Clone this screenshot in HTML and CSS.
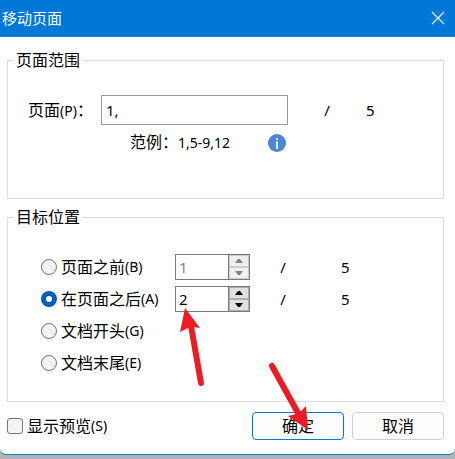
FILE: index.html
```html
<!DOCTYPE html>
<html lang="zh-CN">
<head>
    <meta charset="UTF-8">
    <meta name="viewport" content="width=device-width, initial-scale=1.0">
    <title>移动页面</title>
    <link rel="stylesheet" href="styles.css">
</head>
<body>
    <form class="dialog">
        <div class="title-bar">
            <h1>移动页面</h1>
            <button type="button" class="close-btn" aria-label="关闭">
                <svg width="14" height="14" viewBox="0 0 14 14"><path d="M1 1L13 13M13 1L1 13" stroke="#fff" stroke-width="1.2" fill="none"/></svg>
            </button>
        </div>

        <fieldset class="group">
            <legend>页面范围</legend>
            <div class="range-body">
                <div class="range-row">
                    <label for="pages">页面<span class="latin">(P)</span>：</label>
                    <input type="text" id="pages" class="pages-input" value="1,">
                    <span class="slash">/</span>
                    <span class="total">5</span>
                </div>
                <div class="hint-row">
                    <span>范例：<span class="latin">1,5-9,12</span></span>
                    <svg width="18" height="18" viewBox="0 0 18 18">
                        <circle cx="9" cy="9" r="9" fill="#4a86d8"/>
                        <path d="M8 4h2v2H8zM8 7h2v8H8z" fill="#e3ecf9"/>
                    </svg>
                </div>
            </div>
        </fieldset>

        <fieldset class="group">
            <legend>目标位置</legend>
            <div class="target-body">
                <div class="target-row">
                    <label><input type="radio" name="target">页面之前<span class="latin">(B)</span></label>
                    <div class="spinner disabled">
                        <input type="text" value="1" aria-label="页面之前" disabled>
                        <div class="spin-btns">
                            <button type="button" aria-label="增加" disabled><svg width="8" height="4" viewBox="0 0 8 4"><path d="M0 4L3 0H5L8 4z"/></svg></button>
                            <button type="button" aria-label="减少" disabled><svg width="8" height="4" viewBox="0 0 8 4"><path d="M0 0L3 4H5L8 0z"/></svg></button>
                        </div>
                    </div>
                    <span class="slash">/</span>
                    <span class="total">5</span>
                </div>
                <div class="target-row">
                    <label><input type="radio" name="target" checked>在页面之后<span class="latin">(A)</span></label>
                    <div class="spinner">
                        <input type="text" value="2" aria-label="在页面之后">
                        <div class="spin-btns">
                            <button type="button" aria-label="增加"><svg width="8" height="4" viewBox="0 0 8 4"><path d="M0 4L3 0H5L8 4z"/></svg></button>
                            <button type="button" aria-label="减少"><svg width="8" height="4" viewBox="0 0 8 4"><path d="M0 0L3 4H5L8 0z"/></svg></button>
                        </div>
                        <svg class="arrow arrow-page" width="30" height="80" viewBox="0 0 30 80">
                            <path d="M15 18L25 75" stroke="#ed1c24" stroke-width="6" stroke-linecap="round"/>
                            <path d="M9 0L24 20L17 19L12 20L4 24z" fill="#ed1c24"/>
                        </svg>
                    </div>
                    <span class="slash">/</span>
                    <span class="total">5</span>
                </div>
                <div class="target-row">
                    <label><input type="radio" name="target">文档开头<span class="latin">(G)</span></label>
                </div>
                <div class="target-row">
                    <label><input type="radio" name="target">文档末尾<span class="latin">(E)</span></label>
                </div>
            </div>
        </fieldset>

        <div class="footer">
            <label><input type="checkbox">显示预览<span class="latin">(S)</span></label>
            <div class="actions">
                <div class="ok-wrap">
                    <button type="submit" class="btn btn-ok">确定</button>
                    <svg class="arrow arrow-ok" width="44" height="70" viewBox="0 0 44 70">
                        <path d="M4 4L30 51" stroke="#ed1c24" stroke-width="6" stroke-linecap="round"/>
                        <path d="M40 68L20 54L28 52L33 49L38 44z" fill="#ed1c24"/>
                    </svg>
                </div>
                <button type="button" class="btn">取消</button>
            </div>
        </div>
    </form>
</body>
</html>
```

FILE: styles.css
```css
* { margin: 0; padding: 0; box-sizing: border-box; }

body {
    font-family: "Noto Sans", "Noto Sans CJK SC", sans-serif;
    font-size: 16px;
    line-height: 22px;
    color: #000;
    background: #b4b4b4;
}

input, button {
    font: inherit;
    color: inherit;
}

.latin {
    font-size: 14px;
}

.slash, .total {
    font-size: 15px;
}

.dialog {
    background: #fff;
    border-bottom: 1px solid #0078d7;
    border-radius: 0 0 6px 6px;
}

/* title bar */
.title-bar {
    display: flex;
    align-items: center;
    justify-content: space-between;
    height: 37px;
    padding: 0 10px 2px 2px;
    background: #0078d7;
    color: #fff;
}

.title-bar h1 {
    font-size: 15px;
    font-weight: 400;
}

.close-btn {
    display: flex;
    border: none;
    background: none;
}

/* groups */
.group {
    margin: 0 11px 0 7px;
    border: 1px solid #dcdcdc;
}

.title-bar + .group {
    margin-top: 12px;
}

.group + .group {
    margin-top: 7px;
}

.group legend {
    margin-left: 6px;
    padding: 0 2px;
}

.range-body {
    padding: 24px 0 44px 20px;
}

.range-row {
    display: flex;
    align-items: center;
}

.range-row label {
    width: 73px;
    white-space: nowrap;
}

.pages-input {
    width: 187px;
    height: 30px;
    padding: 0 4px;
    border: 1px solid #999;
    font-size: 15px;
}

.range-row .slash {
    width: 78px;
    text-align: center;
}

.hint-row {
    display: flex;
    align-items: center;
    gap: 38px;
    margin-top: 6px;
    padding-left: 102px;
}

.target-body {
    padding: 23px 0 22px 33px;
}

.target-row {
    display: flex;
    align-items: center;
    height: 32px;
}

.target-row label {
    display: flex;
    align-items: center;
    width: 134px;
    white-space: nowrap;
}

input[type="radio"], input[type="checkbox"] {
    appearance: none;
    width: 16px;
    height: 16px;
    margin-right: 4px;
    border: 1px solid #777;
    background: #f3f3f3;
}

input[type="radio"] {
    border-radius: 50%;
}

input[type="radio"]:checked {
    border: 5px solid #005fb8;
    background: #fff;
}

input[type="checkbox"] {
    border-radius: 3px;
}

/* number box with up / down */
.spinner {
    position: relative;
    display: flex;
    width: 75px;
    height: 26px;
    border: 1px solid #7a7a7a;
}

.spinner input {
    flex: 1;
    min-width: 0;
    padding: 0 3px;
    border: none;
    background: #fff;
    font-size: 15px;
}

.spin-btns {
    display: flex;
    flex-direction: column;
    width: 21px;
    border-left: 1px solid #7a7a7a;
}

.spin-btns button {
    flex: 1;
    display: flex;
    align-items: center;
    justify-content: center;
    border: 1px solid #adadad;
    background: #e1e1e1;
}

.spinner.disabled input {
    color: #838383;
}

.spinner.disabled button {
    border-color: #ccc;
    background: #f0f0f0;
}

.spinner.disabled svg {
    fill: #838383;
}

.target-row .slash {
    width: 66px;
    text-align: center;
}

.target-row .total {
    margin-left: 25px;
}

/* footer */
.footer {
    display: flex;
    align-items: center;
    justify-content: space-between;
    padding: 10px 11px 14px 7px;
}

.footer label {
    display: flex;
    align-items: center;
}

.actions {
    display: flex;
    gap: 8px;
}

.ok-wrap {
    position: relative;
}

.btn {
    display: block;
    width: 92px;
    height: 28px;
    border: 1px solid #d0d0d0;
    border-radius: 4px;
    background: #fdfdfd;
}

.btn-ok {
    border-color: #0078d4;
}

/* red pointers */
.arrow {
    position: absolute;
    fill: none;
    pointer-events: none;
}

.arrow-page {
    left: 0;
    top: 21px;
}

.arrow-ok {
    left: 16px;
    top: -50px;
}
```
